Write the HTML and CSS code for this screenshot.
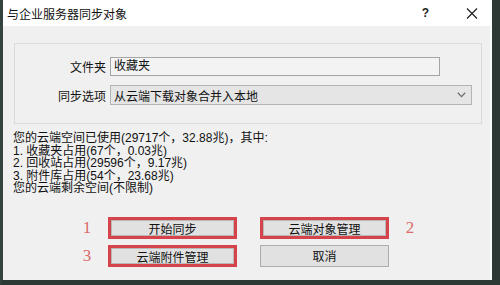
FILE: index.html
```html
<!DOCTYPE html>
<html lang="zh-CN">
<head>
<meta charset="utf-8">
<title>与企业服务器同步对象</title>
<link rel="stylesheet" href="styles.css">
</head>
<body>
<div class="dialog">
  <div class="titlebar">
    <span class="title">与企业服务器同步对象</span>
    <span class="help">?</span>
    <span class="close">
      <svg width="12" height="11" viewBox="0 0 12 11"><path d="M1 0.5 L11 10.5 M11 0.5 L1 10.5" stroke="#1a1a1a" stroke-width="1.1" fill="none"/></svg>
    </span>
  </div>
  <div class="content">
    <div class="group">
      <label class="label">文件夹</label>
      <div class="input">收藏夹</div>
      <label class="label">同步选项</label>
      <div class="select">
        <span>从云端下载对象合并入本地</span>
        <svg class="chev" width="9" height="6" viewBox="0 0 9 6"><path d="M0.8 0.8 L4.5 4.6 L8.2 0.8" stroke="#6d6d6d" stroke-width="1.3" fill="none"/></svg>
      </div>
    </div>
    <div class="info">
      <div>您的云端空间已使用(29717个，32.88兆)，其中:</div>
      <div>1. 收藏夹占用(67个，0.03兆)</div>
      <div>2. 回收站占用(29596个，9.17兆)</div>
      <div>3. 附件库占用(54个，23.68兆)</div>
      <div>您的云端剩余空间(不限制)</div>
    </div>
    <div class="actions">
      <span class="num">1</span>
      <button class="btn marked">开始同步</button>
      <button class="btn marked right">云端对象管理</button>
      <span class="num">2</span>
      <span class="num">3</span>
      <button class="btn marked">云端附件管理</button>
      <button class="btn right">取消</button>
      <span></span>
    </div>
  </div>
</div>
</body>
</html>
```

FILE: styles.css
```css
html, body {
  margin: 0;
  padding: 0;
  background: #2e3b37;
}

.dialog {
  box-sizing: border-box;
  width: 500px;
  height: 285px;
  border-left: 3px solid #34433f;
  border-right: 8px solid #2c3935;
  border-bottom: 5px solid #2c3935;
  background: #f0f0f0;
  box-shadow: inset -2px 0 0 #fafafa;
  display: flex;
  flex-direction: column;
  font-family: "Liberation Sans", "Noto Sans CJK SC", sans-serif;
  font-size: 12px;
  color: #111;
}

.titlebar {
  height: 26px;
  background: #fff;
  display: flex;
  align-items: center;
  padding-left: 4px;
  flex: none;
}

.title {
  font-size: 12px;
  color: #111;
}

.help {
  margin-left: auto;
  font-size: 12px;
  font-weight: bold;
  color: #222;
  margin-right: 37px;
}

.close {
  display: flex;
  margin-right: 14px;
}

.content {
  padding: 17px 10px 0 11px;
}

.group {
  box-sizing: border-box;
  height: 81px;
  border: 1px solid #dadada;
  padding: 13px 0 0 0;
  display: grid;
  grid-template-columns: 91px auto;
  grid-template-rows: 19px 20px;
  column-gap: 4px;
  row-gap: 9px;
  align-items: center;
}

.label {
  text-align: right;
  color: #111;
}

.input {
  box-sizing: border-box;
  width: 330px;
  height: 19px;
  border: 1px solid #a5a5a5;
  background: #f3f3f3;
  padding-left: 3px;
  line-height: 17px;
}

.select {
  box-sizing: border-box;
  width: 362px;
  height: 20px;
  border: 1px solid #b4b4b4;
  background: #e5e5e5;
  padding: 0 5px 0 3px;
  display: flex;
  align-items: center;
  justify-content: space-between;
}

.info {
  margin-top: 8px;
  margin-left: -1px;
  line-height: 12.5px;
  color: #111;
}

.actions {
  margin-top: 22px;
  margin-left: 65px;
  display: grid;
  grid-template-columns: 16px 129px 139px 16px;
  grid-template-rows: 22px 22px;
  column-gap: 13px;
  row-gap: 6px;
  align-items: center;
}

.num {
  font-family: "Liberation Serif", serif;
  font-size: 17px;
  color: #dc6a6a;
  text-align: center;
}

.btn {
  box-sizing: border-box;
  width: 129px;
  height: 22px;
  margin: 0;
  padding: 0;
  border: 1px solid #adadad;
  background: #e1e1e1;
  font-family: "Liberation Sans", "Noto Sans CJK SC", sans-serif;
  font-size: 12px;
  color: #111;
}

.btn.right {
  justify-self: end;
}

.btn.marked {
  border: 3px solid #d6434b;
  box-shadow: inset 0 0 0 1px #b8b8b8;
}
```
